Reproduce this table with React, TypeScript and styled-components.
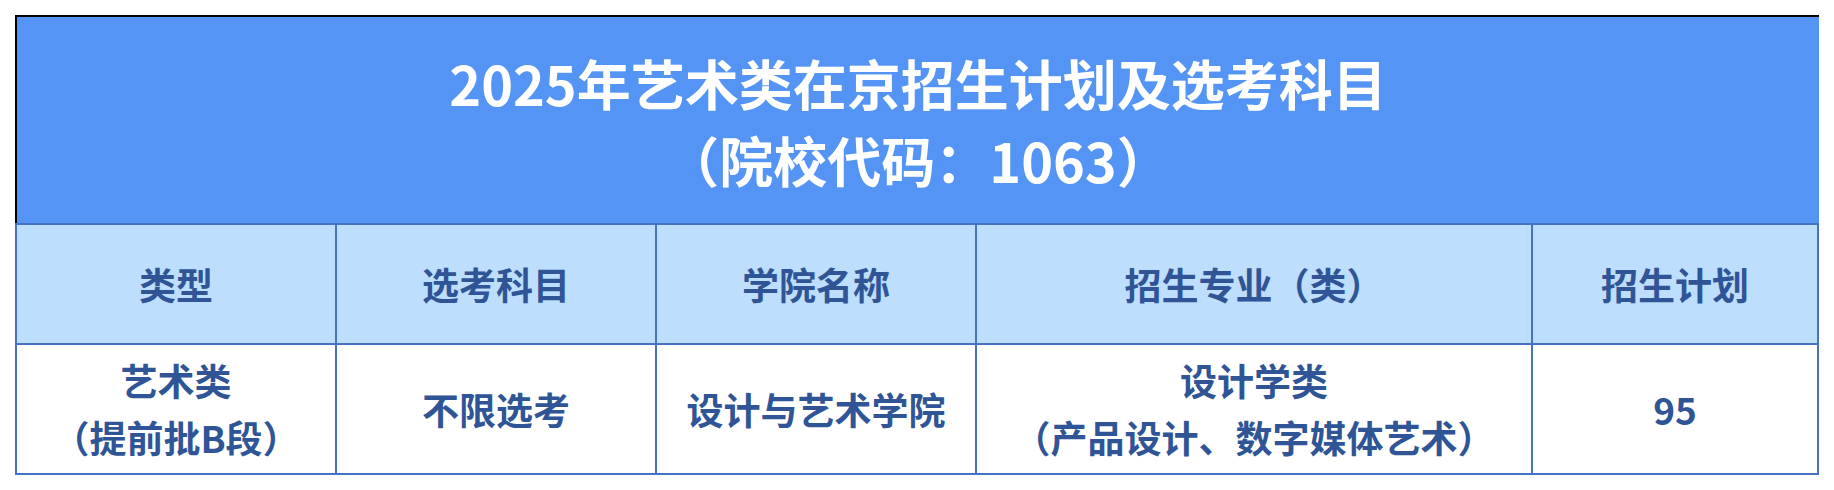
import React from "react";
import styled, { createGlobalStyle } from "styled-components";

const GlobalStyle = createGlobalStyle`
  html, body {
    margin: 0;
    padding: 0;
    background: #ffffff;
  }
  body {
    font-family: "Noto Sans CJK SC", "Noto Sans", sans-serif;
  }
`;

const Page = styled.div`
  padding: 15px;
  width: 1804px;
`;

const Title = styled.div`
  box-sizing: border-box;
  height: 208px;
  background: #5394f5;
  border-top: 2px solid #000000;
  border-left: 2px solid #000000;
  display: flex;
  flex-direction: column;
  align-items: center;
  justify-content: center;
  color: #ffffff;
  font-weight: 700;
  font-size: 54px;
  line-height: 77px;
  padding-top: 2px;
`;

const Grid = styled.div`
  display: grid;
  grid-template-columns: 320px 320px 320px 556px 286px;
  grid-template-rows: 120px 130px;
  border-right: 2px solid #4472c4;
  border-bottom: 2px solid #4472c4;
  width: 1804px;
  box-sizing: border-box;
`;

const Cell = styled.div<{ $head?: boolean }>`
  box-sizing: border-box;
  border-top: 2px solid #4472c4;
  border-left: 2px solid #4472c4;
  background: ${(p) => (p.$head ? "#bddefc" : "#ffffff")};
  color: #2f5597;
  font-weight: 700;
  font-size: 37px;
  line-height: 57px;
  display: flex;
  flex-direction: column;
  align-items: center;
  justify-content: center;
  text-align: center;
`;

const heads = ["类型", "选考科目", "学院名称", "招生专业（类）", "招生计划"];

const row: string[][] = [
  ["艺术类", "（提前批B段）"],
  ["不限选考"],
  ["设计与艺术学院"],
  ["设计学类", "（产品设计、数字媒体艺术）"],
  ["95"],
];

export default function App() {
  return (
    <>
      <GlobalStyle />
      <Page>
        <Title>
          <div>2025年艺术类在京招生计划及选考科目</div>
          <div>（院校代码：1063）</div>
        </Title>
        <Grid>
          {heads.map((h) => (
            <Cell $head key={h}>
              {h}
            </Cell>
          ))}
          {row.map((lines, i) => (
            <Cell key={i}>
              {lines.map((l) => (
                <div key={l}>{l}</div>
              ))}
            </Cell>
          ))}
        </Grid>
      </Page>
    </>
  );
}
